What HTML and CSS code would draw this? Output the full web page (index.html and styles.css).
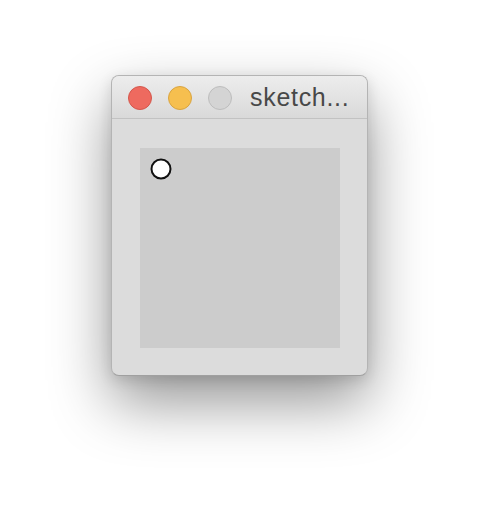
FILE: index.html
```html
<!DOCTYPE html>
<html>
<head>
<meta charset="utf-8">
<link rel="stylesheet" href="styles.css">
</head>
<body>
<div class="window">
  <div class="titlebar">
    <span class="light red"></span>
    <span class="light yellow"></span>
    <span class="light gray"></span>
    <span class="title">sketch...</span>
  </div>
  <div class="content">
    <div class="canvas">
      <svg class="dot" width="24" height="24" viewBox="0 0 24 24"><circle cx="12" cy="12" r="9.5" fill="#fff" stroke="#111" stroke-width="2"/></svg>
    </div>
  </div>
</div>
</body>
</html>
```
FILE: styles.css
```css
html, body { margin: 0; padding: 0; background: #fff; }
body { width: 480px; height: 524px; padding: 75px 0 0 111px; box-sizing: border-box; overflow: hidden; }
.window {
  width: 257px;
  height: 301px;
  box-sizing: border-box;
  border: 1px solid #b4b4b4;
  border-bottom-color: #a0a0a0;
  border-radius: 8px;
  background: #dcdcdc;
  box-shadow: 0 26px 60px rgba(0,0,0,0.42), 0 4px 14px rgba(0,0,0,0.12);
  overflow: hidden;
  display: flex;
  flex-direction: column;
}
.titlebar {
  height: 43px;
  box-sizing: border-box;
  border-bottom: 1px solid #c2c2c2;
  background: linear-gradient(#ededed, #d9d9d9);
  display: flex;
  align-items: center;
  padding: 2px 0 0 16px;
  gap: 16px;
}
.light { width: 24px; height: 24px; border-radius: 50%; box-sizing: border-box; flex: none; }
.red { background: #ee6a5f; border: 1px solid #d4574c; }
.yellow { background: #f6bf4f; border: 1px solid #d9a441; }
.gray { background: #d4d4d4; border: 1px solid #bdbdbd; }
.title {
  font-family: "Liberation Sans", Arial, sans-serif;
  font-size: 25px;
  letter-spacing: 0.7px;
  color: #484848;
  margin-left: 2px;
  margin-top: -1px;
  white-space: nowrap;
}
.content { flex: 1; display: flex; padding: 29px 0 0 28px; }
.canvas { width: 200px; height: 200px; background: #cccccc; position: relative; }
.dot { position: absolute; left: 9px; top: 9px; }
```
